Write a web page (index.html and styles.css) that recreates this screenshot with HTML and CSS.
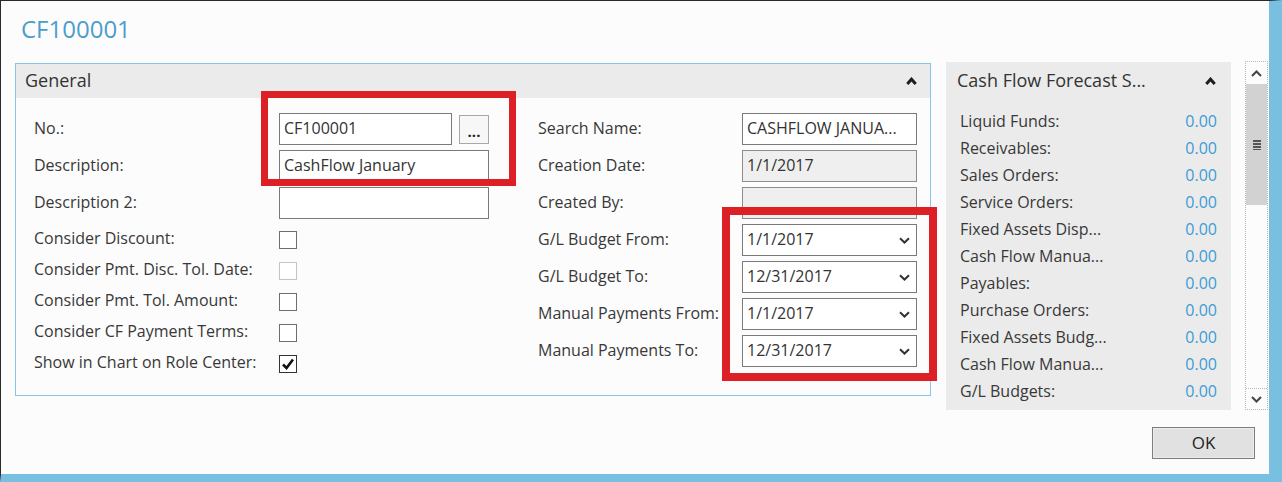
FILE: index.html
```html
<!DOCTYPE html>
<html lang="en">
<head>
<meta charset="utf-8">
<title>CF100001</title>
<link rel="stylesheet" href="styles.css">
</head>
<body>
<div class="window">
  <h1 class="title">CF100001</h1>
  <div class="main">
    <section class="fasttab">
      <header class="tab-head">
        <span>General</span>
        <svg class="collapse" width="11" height="8" viewBox="0 0 11 8"><polyline points="1.3,7 5.5,2.2 9.7,7" fill="none" stroke="#1e1e1e" stroke-width="3"/></svg>
      </header>
      <div class="tab-body">
        <div class="col col-left">
          <div class="row"><span class="label">No.:</span><span class="field field-no">CF100001</span><span class="assist">...</span></div>
          <div class="row"><span class="label">Description:</span><span class="field field-wide">CashFlow January</span></div>
          <div class="row"><span class="label">Description 2:</span><span class="field field-wide"></span></div>
          <div class="row cb"><span class="label">Consider Discount:</span><span class="check"></span></div>
          <div class="row cb"><span class="label">Consider Pmt. Disc. Tol. Date:</span><span class="check disabled"></span></div>
          <div class="row cb"><span class="label">Consider Pmt. Tol. Amount:</span><span class="check"></span></div>
          <div class="row cb"><span class="label">Consider CF Payment Terms:</span><span class="check"></span></div>
          <div class="row cb"><span class="label">Show in Chart on Role Center:</span><span class="check checked"><svg width="16" height="16" viewBox="0 0 16 16"><polyline points="3,8.5 6.5,12 13,3.5" fill="none" stroke="#111" stroke-width="2.6"/></svg></span></div>
        </div>
        <div class="col col-mid">
          <div class="row"><span class="label">Search Name:</span><span class="field field-mid">CASHFLOW JANUA...</span></div>
          <div class="row"><span class="label">Creation Date:</span><span class="field field-mid readonly">1/1/2017</span></div>
          <div class="row"><span class="label">Created By:</span><span class="field field-mid readonly"></span></div>
          <div class="row"><span class="label">G/L Budget From:</span><span class="field field-mid dropdown">1/1/2017<svg width="11" height="7" viewBox="0 0 11 7"><polyline points="1,1.2 5.5,5.5 10,1.2" fill="none" stroke="#333" stroke-width="2"/></svg></span></div>
          <div class="row"><span class="label">G/L Budget To:</span><span class="field field-mid dropdown">12/31/2017<svg width="11" height="7" viewBox="0 0 11 7"><polyline points="1,1.2 5.5,5.5 10,1.2" fill="none" stroke="#333" stroke-width="2"/></svg></span></div>
          <div class="row"><span class="label">Manual Payments From:</span><span class="field field-mid dropdown">1/1/2017<svg width="11" height="7" viewBox="0 0 11 7"><polyline points="1,1.2 5.5,5.5 10,1.2" fill="none" stroke="#333" stroke-width="2"/></svg></span></div>
          <div class="row"><span class="label">Manual Payments To:</span><span class="field field-mid dropdown">12/31/2017<svg width="11" height="7" viewBox="0 0 11 7"><polyline points="1,1.2 5.5,5.5 10,1.2" fill="none" stroke="#333" stroke-width="2"/></svg></span></div>
        </div>
      </div>
      <div class="callout callout-no"></div>
      <div class="callout callout-dates"></div>
    </section>
    <aside class="factbox">
      <header class="fact-head">
        <span>Cash Flow Forecast S...</span>
        <svg class="collapse" width="11" height="8" viewBox="0 0 11 8"><polyline points="1.3,7 5.5,2.2 9.7,7" fill="none" stroke="#1e1e1e" stroke-width="3"/></svg>
      </header>
      <ul class="fact-list">
        <li><span>Liquid Funds:</span><span class="val">0.00</span></li>
        <li><span>Receivables:</span><span class="val">0.00</span></li>
        <li><span>Sales Orders:</span><span class="val">0.00</span></li>
        <li><span>Service Orders:</span><span class="val">0.00</span></li>
        <li><span>Fixed Assets Disp...</span><span class="val">0.00</span></li>
        <li><span>Cash Flow Manua...</span><span class="val">0.00</span></li>
        <li><span>Payables:</span><span class="val">0.00</span></li>
        <li><span>Purchase Orders:</span><span class="val">0.00</span></li>
        <li><span>Fixed Assets Budg...</span><span class="val">0.00</span></li>
        <li><span>Cash Flow Manua...</span><span class="val">0.00</span></li>
        <li><span>G/L Budgets:</span><span class="val">0.00</span></li>
      </ul>
    </aside>
    <div class="scrollbar">
      <div class="sb-btn sb-up"><svg width="11" height="7" viewBox="0 0 11 7"><polyline points="1,6 5.5,1.5 10,6" fill="none" stroke="#444" stroke-width="2"/></svg></div>
      <div class="sb-thumb"><span class="grip"></span></div>
      <div class="sb-track"></div>
      <div class="sb-btn sb-down"><svg width="11" height="7" viewBox="0 0 11 7"><polyline points="1,1 5.5,5.5 10,1" fill="none" stroke="#444" stroke-width="2"/></svg></div>
    </div>
  </div>
  <div class="actions">
    <button class="ok" type="button">OK</button>
  </div>
</div>
</body>
</html>
```
FILE: styles.css
```css
* { box-sizing: border-box; }
html, body { margin: 0; padding: 0; }
body {
  width: 1282px;
  height: 482px;
  overflow: hidden;
  background: #222;
  font-family: "Open Sans", sans-serif;
  color: #383838;
}
.window {
  position: relative;
  width: 1282px;
  height: 482px;
  background: #fcfcfc;
  border-top: 1px solid #2a2a2a;
  border-left: 1px solid #2a2a2a;
  border-right: 13px solid #78bfe0;
  border-bottom: 8px solid #78bfe0;
  padding: 0 0 0 14px;
}
.title {
  margin: 0 0 0 6px;
  height: 60px;
  padding-top: 12px;
  font-size: 24px;
  line-height: 32px;
  font-weight: 400;
  color: #4d9dcc;
}
.main {
  display: flex;
  align-items: flex-start;
  height: 349px;
}
.main > * { flex: none; }
.fasttab {
  position: relative;
  width: 916px;
  margin-top: 2px;
  border: 1px solid #86c6e6;
  background: #fcfcfc;
}
.tab-head {
  height: 34px;
  background: #ebebeb;
  display: flex;
  align-items: center;
  justify-content: space-between;
  padding: 0 13px 3px 9px;
  font-size: 18px;
  color: #333;
}
.tab-head .collapse { margin-top: 3px; }
.tab-body {
  display: flex;
  gap: 49px;
  padding: 15px 13px 16px 18px;
  font-size: 16px;
}
.col-left { width: 455px; }
.col-mid { width: 379px; }
.row {
  display: flex;
  align-items: center;
  height: 32px;
  margin-bottom: 5px;
}
.row.cb { height: 31px; margin-bottom: 0; }
.col-left .label { width: 245px; }
.col-mid .label { width: 204px; }
.label { white-space: nowrap; flex: none; padding-bottom: 3px; }
.field {
  height: 32px;
  border: 1px solid #7a7a7a;
  background: #fff;
  padding: 0 4px 2px 4px;
  display: flex;
  align-items: center;
  white-space: nowrap;
  color: #333;
  flex: none;
}
.field-no { width: 173px; }
.field-wide { width: 210px; }
.field-mid { width: 175px; }
.readonly { background: #efefef; border-color: #8d8d8d; }
.dropdown { justify-content: space-between; padding-right: 6px; }
.dropdown svg { margin-top: 2px; }
.assist {
  width: 30px;
  height: 29px;
  margin-left: 7px;
  border: 1px solid #a8a8a8;
  background: #f7f7f7;
  font-size: 15px;
  font-weight: 700;
  line-height: 30px;
  text-align: center;
  color: #222;
}
.check {
  width: 18px;
  height: 18px;
  border: 1px solid #6e6e6e;
  background: #fff;
  display: flex;
  align-items: center;
  justify-content: center;
  flex: none;
}
.check.disabled { border-color: #c4c4c4; }
.check.checked { border-color: #333; }
.callout {
  position: absolute;
  border-style: solid;
  border-color: #dd1f26;
}
.callout-no {
  left: 245px;
  top: 27px;
  width: 255px;
  height: 95px;
  border-width: 7px;
}
.callout-dates {
  left: 706px;
  top: 143px;
  width: 215px;
  height: 174px;
  border-width: 8px;
}
.factbox {
  width: 285px;
  height: 348px;
  margin: 1px 0 0 15px;
  background: #ebebeb;
}
.fact-head {
  height: 38px;
  display: flex;
  align-items: center;
  justify-content: space-between;
  padding: 0 15px 3px 11px;
  font-size: 18px;
  color: #333;
}
.fact-head .collapse { margin-top: 3px; }
.fact-list {
  list-style: none;
  margin: 0;
  padding: 8px 14px 0 14px;
  font-size: 16px;
}
.fact-list li {
  height: 27.1px;
  display: flex;
  align-items: center;
  justify-content: space-between;
  white-space: nowrap;
  padding-bottom: 2px;
}
.val { color: #3d9bd6; }
.scrollbar {
  width: 23px;
  height: 349px;
  margin-left: 14px;
  border: 1px dotted #b8b8b8;
  background: #fcfcfc;
  display: flex;
  flex-direction: column;
}
.sb-btn {
  display: flex;
  align-items: center;
  justify-content: center;
  flex: none;
}
.sb-up { height: 22px; }
.sb-down { height: 21px; border-top: 1px dotted #b8b8b8; }
.sb-thumb {
  height: 121px;
  background: #d2d2d2;
  display: flex;
  align-items: center;
  justify-content: center;
  flex: none;
}
.grip {
  width: 8px;
  height: 10px;
  background: repeating-linear-gradient(to bottom, #555 0 2px, transparent 2px 3px);
}
.sb-track { flex: 1; }
.actions {
  display: flex;
  justify-content: flex-end;
  padding: 17px 14px 0 0;
}
.ok {
  width: 103px;
  height: 32px;
  border: 1px solid #7d7d7d;
  background: #e1e1e1;
  box-shadow: inset 0 0 0 1px #ececec;
  font-family: "Open Sans", sans-serif;
  font-size: 17px;
  color: #222;
  padding: 0 0 2px 0;
}
```
